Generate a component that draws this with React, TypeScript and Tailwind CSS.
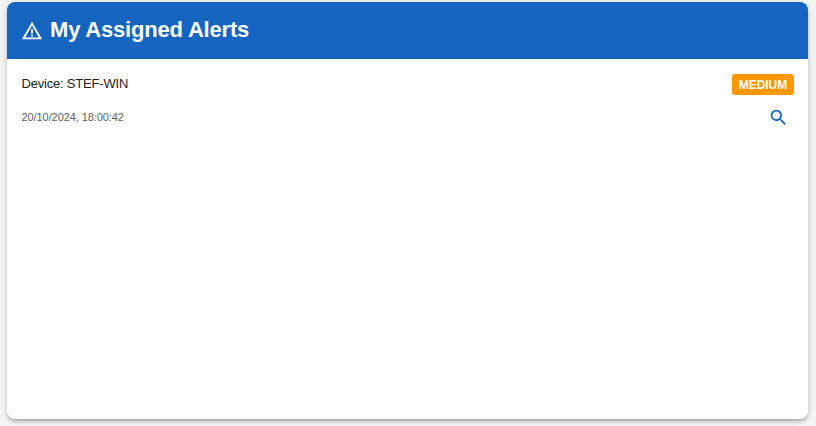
import { MdWarningAmber, MdSearch } from "react-icons/md";

export default function App() {
  return (
    <div className="h-[426px] w-[816px] overflow-hidden bg-[#f5f5f5] pt-[2px] pl-[7px] font-['Liberation_Sans',Arial,sans-serif]">
      <section className="flex h-[417px] w-[801px] flex-col overflow-hidden rounded-lg bg-white shadow-[0_3px_3px_-2px_rgba(0,0,0,0.2),0_3px_4px_0_rgba(0,0,0,0.14),0_1px_8px_0_rgba(0,0,0,0.12)]">
        <header className="flex h-[57px] shrink-0 items-center gap-[7px] bg-[#1565c0] pl-[14px] text-white">
          <MdWarningAmber className="size-[22px]" />
          <h1 className="-mt-[2px] text-[22px] leading-7 font-bold tracking-[-0.19px]">My Assigned Alerts</h1>
        </header>
        <div className="flex justify-between pt-[15px] pr-[14px] pl-[14.5px]">
          <div className="flex flex-col">
            <span className="text-[13px] leading-5 tracking-[-0.2px] text-[#212121]">Device: STEF-WIN</span>
            <time className="mt-[15px] text-[11px] leading-4 tracking-[-0.08px] text-[#616161]">20/10/2024, 18:00:42</time>
          </div>
          <div className="flex flex-col items-end">
            <span className="flex h-[21px] w-[62px] items-center justify-center rounded-[3px] bg-[#ff9800] text-xs font-bold tracking-[-0.05px] text-white">MEDIUM</span>
            <button className="mt-[12px] mr-[5px]" aria-label="View alert">
              <MdSearch className="size-[21px] text-[#1565c0]" />
            </button>
          </div>
        </div>
      </section>
    </div>
  );
}
